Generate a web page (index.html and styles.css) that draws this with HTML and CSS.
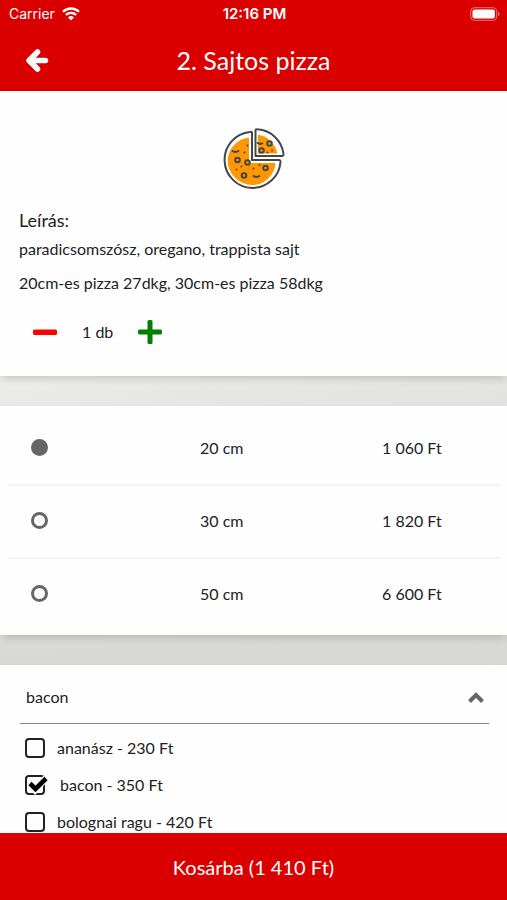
FILE: index.html
```html
<!DOCTYPE html>
<html lang="hu">
<head>
<meta charset="utf-8">
<meta name="viewport" content="width=device-width, initial-scale=1">
<title>Sajtos pizza</title>
<link rel="stylesheet" href="styles.css">
</head>
<body>
<header class="top">
  <div class="status">
    <div class="carrier">
      <span>Carrier</span>
      <svg width="18" height="14" viewBox="0 0 18 14" aria-hidden="true" fill="none" stroke="#fff" stroke-width="2.3">
        <path d="M1 4.8a11.3 11.3 0 0 1 16 0M3.9 7.9a7.2 7.2 0 0 1 10.2 0"/>
        <path d="M9 13.6 6 10.4a4.3 4.3 0 0 1 6 0Z" fill="#fff" stroke="none"/>
      </svg>
    </div>
    <time>12:16 PM</time>
    <svg class="battery" width="30" height="14" viewBox="0 0 30 14" aria-hidden="true">
      <rect x=".7" y=".7" width="26" height="12.6" rx="3.6" fill="none" stroke="#fff" stroke-opacity=".45"/>
      <rect x="2.5" y="2.5" width="22.4" height="9" rx="2" fill="#fff"/>
      <path d="M28 4.8c2 .8 2 3.6 0 4.4z" fill="#fff" fill-opacity=".5"/>
    </svg>
  </div>
  <nav class="bar">
    <button class="back" type="button" aria-label="Vissza">
      <svg width="24" height="24" viewBox="0 0 24 24" fill="none" stroke="#fff" stroke-linejoin="round" stroke-linecap="round"><path d="M12.500 4 4 12.500l8.500 8.500" stroke-width="5.500"/><path d="M6 12.500h14.500" stroke-width="5.500"/></svg>
    </button>
    <h1>2. Sajtos pizza</h1>
  </nav>
</header>

<main class="content">
  <section class="card product">
    <svg class="pizza" width="64" height="64" viewBox="0 0 64 64" aria-hidden="true">
      <g fill="#ff9800">
        <path d="M28 9.500A24 24 0 1 0 53.500 34H28Z"/>
        <path d="M34.500 6.500A23 23 0 0 1 55.500 27.500h-21Z"/>
      </g>
      <g stroke="#45464b" stroke-width="2" stroke-linejoin="round" fill="none">
        <path d="M30 4.500V32h27q1.600 0 1.500 2A28 28 0 1 1 28 4Q30 3.500 30 4.500Z" stroke="#fff" stroke-width="6"/>
        <path d="M33.500 2.500q0-1.500 2-1.200A28 28 0 0 1 61.500 26q.2 2-1.500 2H33.500Z" stroke="#fff" stroke-width="5"/>
        <path d="M30 4.500V32h27q1.600 0 1.500 2A28 28 0 1 1 28 4Q30 3.500 30 4.500Z"/>
        <path d="M33.500 2.500q0-1.500 2-1.200A28 28 0 0 1 61.500 26q.2 2-1.500 2H33.500Z"/>
      </g>
      <g fill="none" stroke="#45464b" stroke-width="2">
        <circle cx="15.500" cy="32" r="2.300"/><circle cx="25.500" cy="34.500" r="2.300"/><circle cx="43.500" cy="40" r="2.300"/><circle cx="22" cy="47.500" r="2.300"/><circle cx="39.500" cy="22.500" r="2.300"/><circle cx="47.500" cy="15.500" r="2.300"/>
        <path d="M10 22.500q3 3 7 0M31 47.500q3.500 3 7 0M35 14.500q3 2.500 6 .5"/>
      </g>
      <g fill="#45464b">
        <circle cx="25.500" cy="17.500" r="1"/><circle cx="22.500" cy="24.500" r="1"/><circle cx="19.500" cy="38.500" r="1"/><circle cx="14.500" cy="41.500" r="1"/><circle cx="31.500" cy="40.500" r="1"/><circle cx="37.500" cy="37" r="1"/><circle cx="45.500" cy="24.500" r="1"/><circle cx="50" cy="22.500" r="1"/>
      </g>
    </svg>
    <h2>Leírás:</h2>
    <p>paradicsomszósz, oregano, trappista sajt</p>
    <p>20cm-es pizza 27dkg, 30cm-es pizza 58dkg</p>
    <div class="quantity">
      <button type="button" aria-label="Kevesebb">
        <svg width="24" height="24" viewBox="0 0 24 24"><rect y="9.500" width="24" height="5.500" rx="1.500" fill="red"/></svg>
      </button>
      <output>1 db</output>
      <button type="button" aria-label="Több">
        <svg width="24" height="24" viewBox="0 0 24 24" fill="green"><rect y="9.500" width="24" height="5" rx="1.500"/><rect x="9.500" width="5" height="24" rx="1.500"/></svg>
      </button>
    </div>
  </section>

  <section class="card sizes">
    <label class="size"><input type="radio" name="size" checked><span>20 cm</span><span>1 060 Ft</span></label>
    <label class="size"><input type="radio" name="size"><span>30 cm</span><span>1 820 Ft</span></label>
    <label class="size"><input type="radio" name="size"><span>50 cm</span><span>6 600 Ft</span></label>
  </section>

  <section class="card extras">
    <button class="toggle" type="button" aria-expanded="true">
      <span>bacon</span>
      <svg width="16" height="12" viewBox="0 0 16 12" fill="none" stroke="#666" stroke-width="4"><path d="M1.500 10.500 8 4l6.500 6.500"/></svg>
    </button>
    <label class="extra"><span class="box"><input type="checkbox"></span><span>ananász - 230 Ft</span></label>
    <label class="extra chosen"><span class="box"><input type="checkbox" checked><svg class="tick" width="24" height="20" viewBox="0 0 24 20" fill="none"><path d="M4 9.500 10 15 21 3" stroke="#fff" stroke-width="7"/><path d="M5 8.500 10.500 14 21 3.500" stroke="#000" stroke-width="4.600"/><path d="M1 8v6" stroke="#222" stroke-width="2"/></svg></span><span>bacon - 350 Ft</span></label>
    <label class="extra"><span class="box"><input type="checkbox"></span><span>bolognai ragu - 420 Ft</span></label>
  </section>
</main>

<button class="cart" type="button">Kosárba (1 410 Ft)</button>
</body>
</html>
```
FILE: styles.css
```css
* {
  box-sizing: border-box;
}

body {
  margin: 0;
  height: 100vh;
  display: flex;
  flex-direction: column;
  font: 16px/24px Lato, sans-serif;
  color: #222;
  background: linear-gradient(170deg, #efefed 35%, #e4e4e2 46%, #d9d9d6 66%, #d2d2ce);
}

button {
  border: 0;
  padding: 0;
  background: none;
  font: inherit;
  color: inherit;
  cursor: pointer;
}

svg {
  display: block;
}

.top,
.cart {
  flex: none;
  background: #db0000;
  color: #fff;
}

.status {
  display: grid;
  grid-template-columns: 1fr auto 1fr;
  align-items: center;
  height: 28px;
  padding: 0 7px 0 9px;
  font: 14px/20px Inter, sans-serif;
}

.status time {
  font-size: 15px;
  font-weight: 600;
}

.carrier {
  display: flex;
  align-items: center;
  gap: 7px;
}

.battery {
  justify-self: end;
}

.bar {
  display: grid;
  grid-template-columns: 48px 1fr 48px;
  align-items: center;
  height: 63px;
  padding: 0 13px;
}

.back {
  justify-self: center;
}

h1 {
  margin: 0;
  text-align: center;
  font-size: 25px;
  line-height: 32px;
  font-weight: 400;
}

.content {
  flex: 1;
  min-height: 0;
  overflow-y: auto;
  scrollbar-width: none;
  display: flex;
  flex-direction: column;
  gap: 30px;
}

.card {
  flex: none;
  background: #fefefe;
  box-shadow: 0 4px 8px -2px rgba(0, 0, 0, 0.18);
}

.product {
  padding: 37px 19px 32px;
}

.pizza {
  margin: 0 auto 16px;
}

h2 {
  margin: 0;
  font-size: 18px;
  line-height: 24px;
  font-weight: 400;
}

.product p {
  margin: 5px 0 10px;
}

.quantity {
  display: flex;
  align-items: center;
  gap: 25px;
  margin-top: 25px;
  padding-left: 14px;
}

.sizes {
  padding: 5px 0;
}

.size {
  display: grid;
  grid-template-columns: 2fr 3fr 3fr;
  align-items: center;
  height: 73px;
  text-align: center;
}

.size + .size {
  background: linear-gradient(#f5f5f5, #f5f5f5) 8px 0 / calc(100% - 14px) 2px no-repeat;
}

.size input {
  appearance: none;
  width: 17px;
  height: 17px;
  margin: 0 0 0 31px;
  border: 3px solid #666;
  border-radius: 50%;
}

.size input:checked {
  background: #666;
}

.extras {
  padding: 6px 18px 12px 20px;
}

.toggle {
  display: flex;
  align-items: center;
  justify-content: space-between;
  width: 100%;
  height: 53px;
  margin-bottom: 5px;
  padding: 0 5px 0 6px;
  border-bottom: 1px solid #888;
}

.extra {
  display: flex;
  align-items: center;
  gap: 12px;
  height: 37px;
  padding-left: 5px;
}

.chosen {
  gap: 15px;
}

.box {
  position: relative;
}

.box input {
  display: block;
  appearance: none;
  width: 20px;
  height: 20px;
  margin: 0;
  border: 2px solid #222;
  border-radius: 4px;
}

.tick {
  position: absolute;
  left: 0;
  top: 0;
}

.cart {
  height: 67px;
  font-size: 20px;
}
```
